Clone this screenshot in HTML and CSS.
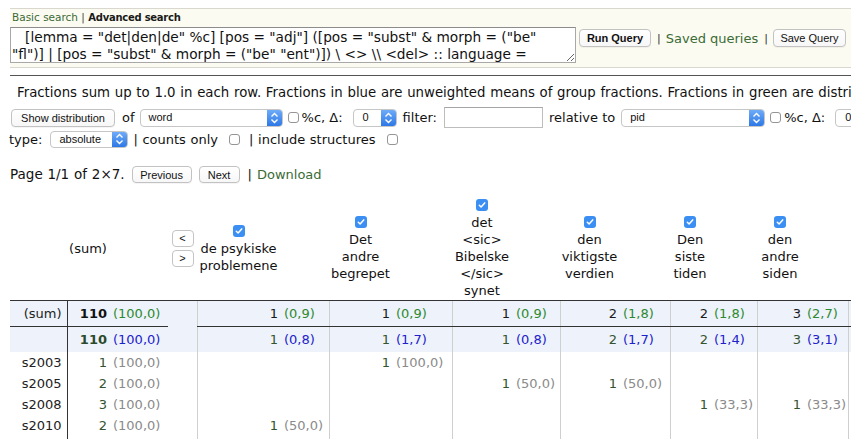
FILE: index.html
```html
<!DOCTYPE html>
<html lang="no">
<head>
<meta charset="utf-8">
<title>Distribution</title>
<link rel="stylesheet" href="styles.css">
</head>
<body>
<div class="query-box">
  <div class="tabs"><a class="link" href="#">Basic search</a> <span class="bar">|</span> <b class="active-tab">Advanced search</b></div>
  <div class="query-row">
    <textarea class="query" spellcheck="false">   [lemma = "det|den|de" %c] [pos = "adj"] ([pos = "subst" &amp; morph = ("be" "fl")] | [pos = "subst" &amp; morph = ("be" "ent")]) \ &lt;&gt; \\ &lt;del&gt; :: language =</textarea>
    <div class="query-actions">
      <button class="btn bold run" type="button">Run Query</button>
      <span class="bar">|</span>
      <a class="link saved" href="#">Saved queries</a>
      <span class="bar">|</span>
      <button class="btn save" type="button">Save Query</button>
    </div>
  </div>
</div>
<hr class="rule">
<p class="note">Fractions sum up to 1.0 in each row. Fractions in blue are unweighted means of group fractions. Fractions in green are distributions over all rows.</p>

<div class="controls">
  <button class="btn show" type="button">Show distribution</button>
  <span class="of">of</span>
  <span class="select sel-word"><span class="sel-text">word</span><span class="sel-arrow"><svg width="9" height="12" viewBox="0 0 9 12"><path d="M1.5 4.5 L4.5 1.5 L7.5 4.5 M1.5 7.5 L4.5 10.5 L7.5 7.5" fill="none" stroke="#fff" stroke-width="1.4"/></svg></span></span>
  <span class="cb cb-a"></span>
  <span class="pc">%c, Δ:</span>
  <span class="select sel-delta"><span class="sel-text">0</span><span class="sel-arrow"><svg width="9" height="12" viewBox="0 0 9 12"><path d="M1.5 4.5 L4.5 1.5 L7.5 4.5 M1.5 7.5 L4.5 10.5 L7.5 7.5" fill="none" stroke="#fff" stroke-width="1.4"/></svg></span></span>
  <span class="filter-lbl">filter:</span>
  <input class="filter" type="text">
  <span class="rel">relative to</span>
  <span class="select sel-pid"><span class="sel-text">pid</span><span class="sel-arrow"><svg width="9" height="12" viewBox="0 0 9 12"><path d="M1.5 4.5 L4.5 1.5 L7.5 4.5 M1.5 7.5 L4.5 10.5 L7.5 7.5" fill="none" stroke="#fff" stroke-width="1.4"/></svg></span></span>
  <span class="cb cb-a"></span>
  <span class="pc">%c, Δ:</span>
  <span class="select sel-delta"><span class="sel-text">0</span><span class="sel-arrow"><svg width="9" height="12" viewBox="0 0 9 12"><path d="M1.5 4.5 L4.5 1.5 L7.5 4.5 M1.5 7.5 L4.5 10.5 L7.5 7.5" fill="none" stroke="#fff" stroke-width="1.4"/></svg></span></span>
</div>

<div class="type-row">
  <span>type:</span>
  <span class="select sel-type"><span class="sel-text">absolute</span><span class="sel-arrow"><svg width="9" height="12" viewBox="0 0 9 12"><path d="M1.5 4.5 L4.5 1.5 L7.5 4.5 M1.5 7.5 L4.5 10.5 L7.5 7.5" fill="none" stroke="#fff" stroke-width="1.4"/></svg></span></span>
  <span class="opt">| counts only</span>
  <span class="cb cb-b"></span>
  <span class="opt2">| include structures</span>
  <span class="cb cb-b"></span>
</div>

<div class="page-row">
  <span class="page-info">Page 1/1 of 2×7.</span>
  <button class="btn prev" type="button">Previous</button>
  <button class="btn next" type="button">Next</button>
  <span class="bar2">|</span>
  <a class="link dl" href="#">Download</a>
</div>

<table class="dist">
  <colgroup>
    <col class="w-label"><col class="w-sum-n"><col class="w-sum-f"><col class="w-nav">
    <col class="w-a-n"><col class="w-a-f">
    <col class="w-b-n"><col class="w-b-f">
    <col class="w-c-n"><col class="w-c-f">
    <col class="w-d-n"><col class="w-d-f">
    <col class="w-e-n"><col class="w-e-f">
    <col class="w-f-n"><col class="w-f-f">
    <col class="w-g-n"><col class="w-g-f">
  </colgroup>
  <thead>
    <tr>
      <th></th>
      <th>(sum)</th><th></th>
      <th class="nav-th"><button class="nav-btn" type="button">&lt;</button><button class="nav-btn" type="button">&gt;</button></th>
      <th><span class="cb on"><svg width="12" height="12" viewBox="0 0 12 12"><path d="M3.3 6.2 L5.1 8 L8.7 3.9" fill="none" stroke="#fff" stroke-width="1.5" stroke-linecap="round" stroke-linejoin="round"/></svg></span><br>de psykiske<br>problemene</th><th></th>
      <th><span class="cb on"><svg width="12" height="12" viewBox="0 0 12 12"><path d="M3.3 6.2 L5.1 8 L8.7 3.9" fill="none" stroke="#fff" stroke-width="1.5" stroke-linecap="round" stroke-linejoin="round"/></svg></span><br>Det<br>andre<br>begrepet</th><th></th>
      <th><span class="cb on"><svg width="12" height="12" viewBox="0 0 12 12"><path d="M3.3 6.2 L5.1 8 L8.7 3.9" fill="none" stroke="#fff" stroke-width="1.5" stroke-linecap="round" stroke-linejoin="round"/></svg></span><br>det<br>&lt;sic&gt;<br>Bibelske<br>&lt;/sic&gt;<br>synet</th><th></th>
      <th><span class="cb on"><svg width="12" height="12" viewBox="0 0 12 12"><path d="M3.3 6.2 L5.1 8 L8.7 3.9" fill="none" stroke="#fff" stroke-width="1.5" stroke-linecap="round" stroke-linejoin="round"/></svg></span><br>den<br>viktigste<br>verdien</th><th></th>
      <th><span class="cb on"><svg width="12" height="12" viewBox="0 0 12 12"><path d="M3.3 6.2 L5.1 8 L8.7 3.9" fill="none" stroke="#fff" stroke-width="1.5" stroke-linecap="round" stroke-linejoin="round"/></svg></span><br>Den<br>siste<br>tiden</th><th></th>
      <th><span class="cb on"><svg width="12" height="12" viewBox="0 0 12 12"><path d="M3.3 6.2 L5.1 8 L8.7 3.9" fill="none" stroke="#fff" stroke-width="1.5" stroke-linecap="round" stroke-linejoin="round"/></svg></span><br>den<br>andre<br>siden</th><th></th>
      <th><span class="cb on"><svg width="12" height="12" viewBox="0 0 12 12"><path d="M3.3 6.2 L5.1 8 L8.7 3.9" fill="none" stroke="#fff" stroke-width="1.5" stroke-linecap="round" stroke-linejoin="round"/></svg></span><br>de<br>andre</th><th></th>
    </tr>
  </thead>
  <tbody>
    <tr class="sum-row">
      <td class="lbl">(sum)</td>
      <td class="n"><b>110</b></td><td class="f green">(100,0)</td>
      <td class="nav-td"></td>
      <td class="n grp">1</td><td class="f green">(0,9)</td>
      <td class="n grp">1</td><td class="f green">(0,9)</td>
      <td class="n grp">1</td><td class="f green">(0,9)</td>
      <td class="n grp">2</td><td class="f green">(1,8)</td>
      <td class="n grp">2</td><td class="f green">(1,8)</td>
      <td class="n grp">3</td><td class="f green">(2,7)</td>
      <td class="n grp">100</td><td class="f green">(90,9)</td>
    </tr>
    <tr class="mean-row">
      <td class="lbl"></td>
      <td class="n"><b>110</b></td><td class="f blue">(100,0)</td>
      <td class="nav-td"></td>
      <td class="n grp">1</td><td class="f blue">(0,8)</td>
      <td class="n grp">1</td><td class="f blue">(1,7)</td>
      <td class="n grp">1</td><td class="f blue">(0,8)</td>
      <td class="n grp">2</td><td class="f blue">(1,7)</td>
      <td class="n grp">2</td><td class="f blue">(1,4)</td>
      <td class="n grp">3</td><td class="f blue">(3,1)</td>
      <td class="n grp">100</td><td class="f blue">(90,5)</td>
    </tr>
    <tr>
      <td class="lbl">s2003</td>
      <td class="n">1</td><td class="f grey">(100,0)</td>
      <td class="nav-td"></td>
      <td class="n grp"></td><td class="f"></td>
      <td class="n grp">1</td><td class="f grey">(100,0)</td>
      <td class="n grp"></td><td class="f"></td>
      <td class="n grp"></td><td class="f"></td>
      <td class="n grp"></td><td class="f"></td>
      <td class="n grp"></td><td class="f"></td>
      <td class="n grp"></td><td class="f"></td>
    </tr>
    <tr>
      <td class="lbl">s2005</td>
      <td class="n">2</td><td class="f grey">(100,0)</td>
      <td class="nav-td"></td>
      <td class="n grp"></td><td class="f"></td>
      <td class="n grp"></td><td class="f"></td>
      <td class="n grp">1</td><td class="f grey">(50,0)</td>
      <td class="n grp">1</td><td class="f grey">(50,0)</td>
      <td class="n grp"></td><td class="f"></td>
      <td class="n grp"></td><td class="f"></td>
      <td class="n grp"></td><td class="f"></td>
    </tr>
    <tr>
      <td class="lbl">s2008</td>
      <td class="n">3</td><td class="f grey">(100,0)</td>
      <td class="nav-td"></td>
      <td class="n grp"></td><td class="f"></td>
      <td class="n grp"></td><td class="f"></td>
      <td class="n grp"></td><td class="f"></td>
      <td class="n grp"></td><td class="f"></td>
      <td class="n grp">1</td><td class="f grey">(33,3)</td>
      <td class="n grp">1</td><td class="f grey">(33,3)</td>
      <td class="n grp">1</td><td class="f grey">(33,3)</td>
    </tr>
    <tr>
      <td class="lbl">s2010</td>
      <td class="n">2</td><td class="f grey">(100,0)</td>
      <td class="nav-td"></td>
      <td class="n grp">1</td><td class="f grey">(50,0)</td>
      <td class="n grp"></td><td class="f"></td>
      <td class="n grp"></td><td class="f"></td>
      <td class="n grp"></td><td class="f"></td>
      <td class="n grp"></td><td class="f"></td>
      <td class="n grp"></td><td class="f"></td>
      <td class="n grp">1</td><td class="f grey">(50,0)</td>
    </tr>
    <tr>
      <td class="lbl">s2011</td>
      <td class="n">1</td><td class="f grey">(100,0)</td>
      <td class="nav-td"></td>
      <td class="n grp"></td><td class="f"></td>
      <td class="n grp"></td><td class="f"></td>
      <td class="n grp"></td><td class="f"></td>
      <td class="n grp"></td><td class="f"></td>
      <td class="n grp"></td><td class="f"></td>
      <td class="n grp"></td><td class="f"></td>
      <td class="n grp">1</td><td class="f grey">(100,0)</td>
    </tr>
  </tbody>
</table>
</body>
</html>
```

FILE: styles.css
```css
html, body {
  margin: 0;
  padding: 0;
  overflow: hidden;
  background: #fff;
}
body {
  font-family: "DejaVu Sans", Verdana, sans-serif;
  font-size: 13px;
  line-height: 17px;
  color: #111;
}

.link { color: #3b6b36; text-decoration: none; }

/* query box */
.query-box {
  margin: 8px 0 0 10px;
  border-top: 1px solid #d8d8cf;
  border-bottom: 1px solid #d8d8cf;
  background: #fbfbf1;
  padding: 1px 0 4px 0;
  white-space: nowrap;
}
.tabs {
  font-size: 10.5px;
  line-height: 14px;
  padding-left: 2px;
  color: #222;
}
.tabs .bar { color: #444; }
.active-tab {
  font-weight: bold;
  font-size: 10px;
  letter-spacing: -0.25px;
  color: #1a1a1a;
}

.query-row {
  display: flex;
  align-items: flex-start;
  margin-top: 2px;
}
.query {
  display: block;
  box-sizing: border-box;
  width: 566px;
  height: 36px;
  margin: 0;
  padding: 1px 14px 1px 1px;
  border: 1px solid #a8a8a8;
  border-top-color: #8c8c8c;
  background: #fff;
  font-family: "DejaVu Sans", Verdana, sans-serif;
  font-size: 13.7px;
  line-height: 17px;
  color: #111;
  overflow: hidden;
  resize: both;
  flex-shrink: 0;
}
.query-actions {
  display: flex;
  align-items: center;
  height: 18px;
  margin-top: 2px;
  flex-shrink: 0;
}
.query-actions .bar {
  font-size: 11px;
  color: #333;
  margin: 0 5px 0 6px;
}
.saved { font-size: 13px; }

.btn {
  box-sizing: border-box;
  height: 18px;
  padding: 0;
  margin: 0;
  border: 1px solid #c2c2c2;
  border-radius: 4px;
  background: linear-gradient(#ffffff, #f7f7f7);
  box-shadow: 0 1px 0 rgba(0,0,0,0.04);
  font-family: "Liberation Sans", Arial, sans-serif;
  font-size: 11px;
  line-height: 16px;
  color: #111;
  text-align: center;
  flex-shrink: 0;
}
.bold { font-weight: bold; }
.run { width: 72px; margin-left: 3px; }
.save { width: 73px; }
.show { width: 104px; }
.prev { width: 60px; margin-left: 7px; height: 17px; }
.next { width: 41px; margin-left: 7px; height: 17px; }

.rule {
  margin: 7px 0 0 10px;
  border: 0;
  border-top: 1px solid #555;
  height: 0;
}

.note {
  margin: 8px 0 0 0;
  padding-left: 17px;
  white-space: nowrap;
  font-size: 13.3px;
  word-spacing: 0.5px;
}

/* controls */
.controls, .type-row, .page-row {
  display: flex;
  align-items: center;
  white-space: nowrap;
}
.controls > *, .type-row > *, .page-row > * { flex-shrink: 0; }
.controls {
  margin-top: 6px;
  height: 21px;
  padding-left: 11px;
}
.type-row {
  margin-top: 2px;
  height: 18px;
  padding-left: 9px;
}
.page-row {
  margin-top: 17px;
  height: 18px;
  padding-left: 10px;
}
.page-info {
  font-size: 13.5px;
  word-spacing: 0.5px;
}

.select {
  box-sizing: border-box;
  display: inline-flex;
  align-items: center;
  height: 18px;
  border: 1px solid #c6c6c6;
  border-radius: 4px;
  background: #fff;
  overflow: hidden;
  font-family: "Liberation Sans", Arial, sans-serif;
  font-size: 11px;
  color: #111;
}
.sel-text { padding-left: 8px; }
.sel-arrow {
  margin-left: auto;
  width: 15px;
  height: 100%;
  display: flex;
  align-items: center;
  justify-content: center;
  background: linear-gradient(#6eabf8, #2d78e6);
}
.sel-word { width: 143px; margin-left: 5px; }
.sel-delta { width: 44px; margin-left: 10px; }
.sel-delta .sel-text { padding-left: 9px; }
.sel-pid { width: 144px; margin-left: 6px; }
.sel-type { width: 78px; margin-left: 8px; height: 17px; }

.of { margin-left: 7px; }
.cb {
  box-sizing: border-box;
  display: inline-block;
  width: 11px;
  height: 11px;
  border: 1px solid #959595;
  border-radius: 3px;
  background: #fff;
}
.cb-a { margin-left: 5px; }
.pc { margin-left: 3px; }
.filter-lbl { margin-left: 6px; }
.filter {
  box-sizing: border-box;
  width: 99px;
  height: 21px;
  margin: 0 0 0 7px;
  border: 1px solid #bdbdbd;
  border-top-color: #a5a5a5;
  padding: 0 3px;
  background: #fff;
}
.rel { margin-left: 6px; }

.opt { margin-left: 5px; word-spacing: 0.5px; }
.cb-b { margin-left: 11px; }
.opt2 { margin-left: 9px; word-spacing: 0.5px; }

.bar2 { margin-left: 8px; }
.dl { margin-left: 5px; }

/* distribution table */
.dist {
  margin: 13px 0 0 10px;
  border-collapse: collapse;
  table-layout: fixed;
  width: 943px;
}
.w-label { width: 57px; }
.w-sum-n { width: 42px; }
.w-sum-f { width: 59px; }
.w-nav { width: 29px; }
.w-a-n { width: 83px; } .w-a-f { width: 49px; }
.w-b-n { width: 63px; } .w-b-f { width: 60px; }
.w-c-n { width: 60px; } .w-c-f { width: 48px; }
.w-d-n { width: 59px; } .w-d-f { width: 51px; }
.w-e-n { width: 40px; } .w-e-f { width: 47px; }
.w-f-n { width: 46px; } .w-f-f { width: 45px; }
.w-g-n { width: 50px; } .w-g-f { width: 55px; }

.dist th {
  font-weight: normal;
  text-align: center;
  vertical-align: middle;
  padding: 1px 0;
  white-space: nowrap;
  border-bottom: 1px solid #333;
  line-height: 17px;
}
.cb.on {
  width: 12px;
  height: 12px;
  border: 0;
  background: #3b8ef2;
  vertical-align: -1px;
}
.cb.on svg { display: block; }
.nav-btn {
  display: block;
  box-sizing: border-box;
  width: 22px;
  height: 17px;
  margin: 0 auto;
  padding: 0;
  border: 1px solid #c4c4c4;
  border-radius: 4px;
  background: #fff;
  font-family: "Liberation Sans", Arial, sans-serif;
  font-size: 11px;
  line-height: 15px;
  color: #111;
}
.nav-btn + .nav-btn { margin-top: 3px; }

.dist td {
  padding: 2px 0;
  line-height: 17px;
  white-space: nowrap;
  overflow: visible;
  color: #35532f;
}
.dist td.lbl {
  text-align: right;
  padding-right: 5px;
  border-right: 1px solid #333;
  color: #222;
}
.dist td.n { text-align: right; padding-right: 2px; }
.dist td.f { text-align: left; padding-left: 4px; }
.dist td.grp { border-left: 1px solid #cfcfcf; }

.sum-row td, .mean-row td {
  background: #edf2fb;
  padding-top: 4px;
  padding-bottom: 4px;
}
.sum-row td { border-bottom: 1px solid #333; color: #1a1a1a; }
.sum-row td.nav-td { border-bottom: 0; }
.sum-row b { color: #111; }
.mean-row b { color: #2b4a2b; }

.dist td.green { color: #2e8a2e; }
.dist td.blue { color: #2121cc; }
.dist td.grey { color: #8a8a8a; }
```
